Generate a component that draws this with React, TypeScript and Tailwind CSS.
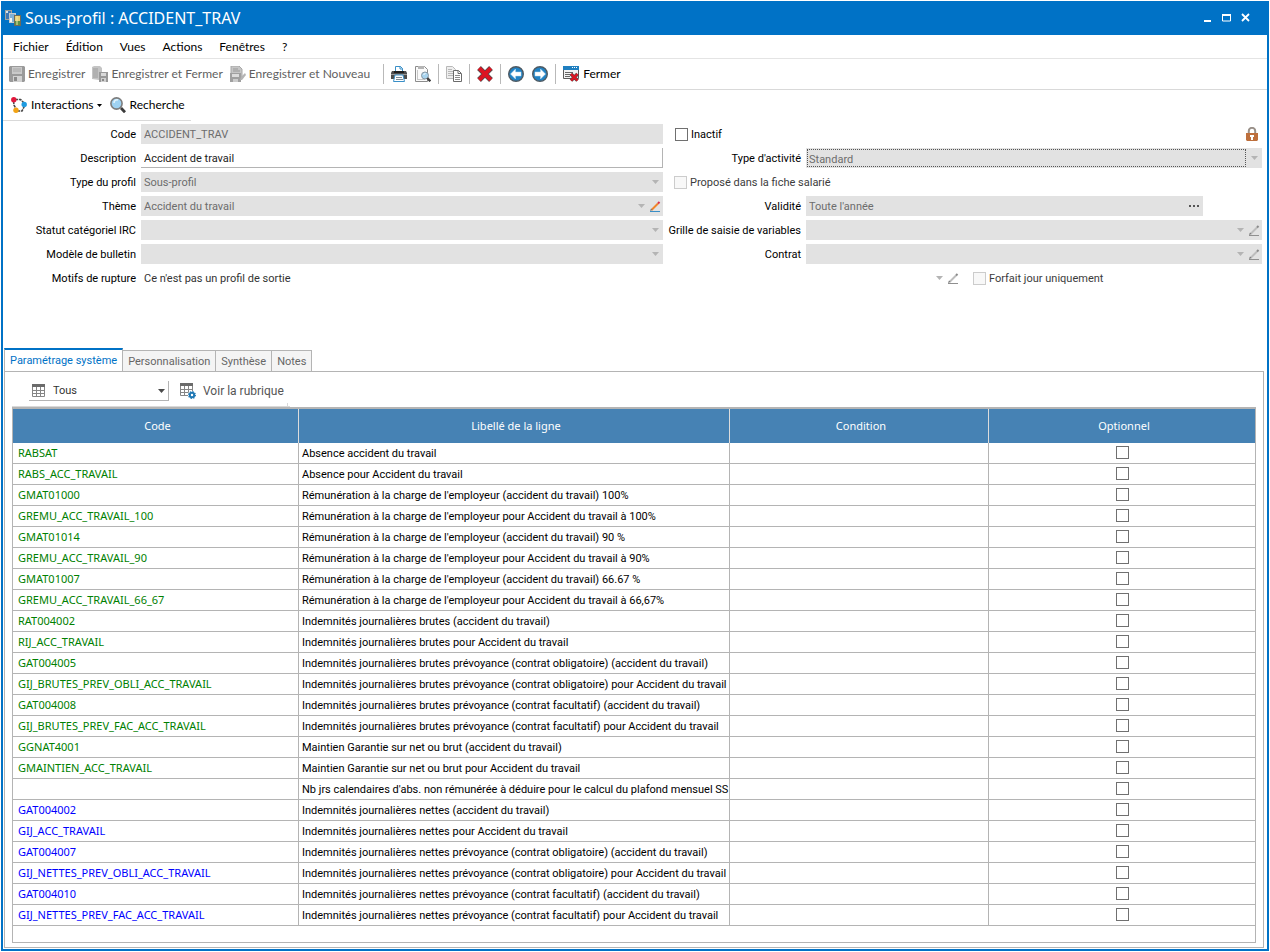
import React, { useState } from 'react'

interface Line {
  code: string
  label: string
  kind: 'system' | 'custom'
}

const lines: Line[] = [
  { code: 'RABSAT', label: 'Absence accident du travail', kind: 'system' },
  { code: 'RABS_ACC_TRAVAIL', label: 'Absence pour Accident du travail', kind: 'system' },
  { code: 'GMAT01000', label: "Rémunération à la charge de l'employeur (accident du travail) 100%", kind: 'system' },
  { code: 'GREMU_ACC_TRAVAIL_100', label: "Rémunération à la charge de l'employeur pour Accident du travail à 100%", kind: 'system' },
  { code: 'GMAT01014', label: "Rémunération à la charge de l'employeur (accident du travail) 90 %", kind: 'system' },
  { code: 'GREMU_ACC_TRAVAIL_90', label: "Rémunération à la charge de l'employeur pour Accident du travail à 90%", kind: 'system' },
  { code: 'GMAT01007', label: "Rémunération à la charge de l'employeur (accident du travail) 66.67 %", kind: 'system' },
  { code: 'GREMU_ACC_TRAVAIL_66_67', label: "Rémunération à la charge de l'employeur pour Accident du travail à 66,67%", kind: 'system' },
  { code: 'RAT004002', label: 'Indemnités journalières brutes (accident du travail)', kind: 'system' },
  { code: 'RIJ_ACC_TRAVAIL', label: 'Indemnités journalières brutes pour Accident du travail', kind: 'system' },
  { code: 'GAT004005', label: 'Indemnités journalières brutes prévoyance (contrat obligatoire) (accident du travail)', kind: 'system' },
  { code: 'GIJ_BRUTES_PREV_OBLI_ACC_TRAVAIL', label: 'Indemnités journalières brutes prévoyance (contrat obligatoire) pour Accident du travail', kind: 'system' },
  { code: 'GAT004008', label: 'Indemnités journalières brutes prévoyance (contrat facultatif) (accident du travail)', kind: 'system' },
  { code: 'GIJ_BRUTES_PREV_FAC_ACC_TRAVAIL', label: 'Indemnités journalières brutes prévoyance (contrat facultatif) pour Accident du travail', kind: 'system' },
  { code: 'GGNAT4001', label: 'Maintien Garantie sur net ou brut (accident du travail)', kind: 'system' },
  { code: 'GMAINTIEN_ACC_TRAVAIL', label: 'Maintien Garantie sur net ou brut pour Accident du travail', kind: 'system' },
  { code: '', label: "Nb jrs calendaires d'abs. non rémunérée à déduire pour le calcul du plafond mensuel SS", kind: 'system' },
  { code: 'GAT004002', label: 'Indemnités journalières nettes (accident du travail)', kind: 'custom' },
  { code: 'GIJ_ACC_TRAVAIL', label: 'Indemnités journalières nettes pour Accident du travail', kind: 'custom' },
  { code: 'GAT004007', label: 'Indemnités journalières nettes prévoyance (contrat obligatoire) (accident du travail)', kind: 'custom' },
  { code: 'GIJ_NETTES_PREV_OBLI_ACC_TRAVAIL', label: 'Indemnités journalières nettes prévoyance (contrat obligatoire) pour Accident du travail', kind: 'custom' },
  { code: 'GAT004010', label: 'Indemnités journalières nettes prévoyance (contrat facultatif) (accident du travail)', kind: 'custom' },
  { code: 'GIJ_NETTES_PREV_FAC_ACC_TRAVAIL', label: 'Indemnités journalières nettes prévoyance (contrat facultatif) pour Accident du travail', kind: 'custom' },
]

const menus = ['Fichier', 'Édition', 'Vues', 'Actions', 'Fenêtres', '?']
const tabs = ['Paramétrage système', 'Personnalisation', 'Synthèse', 'Notes']

/* ---------- icons ---------- */

function Icon({ children }: { children: React.ReactNode }) {
  return (
    <svg width="16" height="16" viewBox="0 0 16 16" fill="none" className="shrink-0">
      {children}
    </svg>
  )
}

const AppIcon = () => (
  <Icon>
    <path d="M0 0h7v10H0z" fill="#a3a49c" />
    <path d="M1 1h5v8H1z" fill="#3f78b4" />
    <path d="M1 1h2v2H1zM4 3h2v2H4z" fill="#d6e4ee" />
    <path d="M4 3h7v10H4z" fill="#c4ccd0" />
    <path d="M5 4h5v8H5z" fill="#7fb0d4" />
    <path d="M5 8h2v4H5z" fill="#eef3f4" />
    <path d="M9 5h7v11H9z" fill="#6f6a58" />
    <path d="M10 6h5v9h-5z" fill="#e6cf74" />
    <path d="M10 11h5v4h-5z" fill="#5a9146" />
    <path d="M12 6v9" stroke="#f2e6a8" />
  </Icon>
)

const SaveIcon = () => (
  <Icon>
    <path d="M1 0h14l1 1v14l-1 1H1l-1-1V1z" fill="#9a9a9a" />
    <path d="M3 1h10v7H3z" fill="#c9c9c9" />
    <path d="M4 3h8M4 5h8" stroke="#a8a8a8" />
    <path d="M4 10h9v6H4z" fill="#d2d2d2" />
    <path d="M5 11h3v4H5z" fill="#8a8a8a" />
  </Icon>
)

const SaveCloseIcon = () => (
  <Icon>
    <path d="M0 1l2-1h6l2 2v5H7v7l-7-1z" fill="#c4c4c4" />
    <path d="M1 2h5v10H1z" fill="#b0b0b0" />
    <path d="M7 6h9v10H7z" fill="#999" />
    <path d="M9 7h5v3H9z" fill="#dadada" />
    <path d="M9 12h5v4H9z" fill="#d0d0d0" />
    <path d="M10 13h2v2h-2z" fill="#888" />
  </Icon>
)

const SaveNewIcon = () => (
  <Icon>
    <path d="M1 0h8l3 3v8H1z" fill="#c6c6c6" stroke="#a8a8a8" />
    <path d="M3 3h5M3 5h7" stroke="#999" />
    <path d="M0 7h11v9H0z" fill="#a0a0a0" />
    <path d="M2 8h7v3H2z" fill="#dcdcdc" />
    <path d="M3 13h5v3H3z" fill="#ccc" />
    <path d="M10 14l1-3 4-4 1 2-4 5z" fill="#b4b4b4" />
  </Icon>
)

const PrintIcon = () => (
  <Icon>
    <path d="M4.500 6V.5h5l2 2V6" fill="#fff" stroke="#3a8fc7" />
    <path d="M9 0v3h3" stroke="#3a8fc7" />
    <path d="M1 5h14l1 2v6H0V7z" fill="#4c4c4c" />
    <path d="M3 5h10v2H3z" fill="#1f1f1f" />
    <path d="M0 8h16v1H0z" fill="#9a9a9a" />
    <path d="M4 9h8l1.500 6.500h-11z" fill="#fff" stroke="#3a8fc7" />
    <path d="M5 11.500h6M5 13.500h7" stroke="#7d8a93" />
  </Icon>
)

const PreviewIcon = () => (
  <Icon>
    <path d="M.5.5h9l3 3v12H.5z" fill="#fafafa" stroke="#8c8c8c" />
    <path d="M3 0h6v3H3z" fill="#b5b5b5" />
    <path d="M2.500 4v10M2 13.500h8" stroke="#c8c8c8" />
    <circle cx="10" cy="9.500" r="3.500" fill="#a8d4ef" stroke="#8797a3" />
    <path d="M8.500 8.500l2-1" stroke="#fff" />
    <path d="M12.300 12l3 3.300" stroke="#3f3f3f" strokeWidth="2.400" />
  </Icon>
)

const CopyIcon = () => (
  <Icon>
    <path d="M.5.5h6l3 3v9h-9z" fill="#eee" stroke="#b8b8b8" />
    <path d="M2 3.500h4M2 5.500h5M2 7.500h5M2 9.500h5" stroke="#b8b8b8" />
    <path d="M7.500 4.500h5l3 3v8h-8z" fill="#fff" stroke="#6b6b6b" />
    <path d="M12 4.500v3h3" stroke="#6b6b6b" />
    <path d="M9 9.500h5M9 11.500h5M9 13.500h5" stroke="#8d8d8d" />
  </Icon>
)

const DeleteIcon = () => (
  <Icon>
    <path d="M2 2l12 12M14 2L2 14" stroke="#5b4a4d" strokeWidth="5.400" />
    <path d="M2.200 2.200l11.600 11.600M13.800 2.200L2.200 13.800" stroke="#dd1421" strokeWidth="3.800" />
  </Icon>
)

const ArrowIcon = ({ right = false }: { right?: boolean }) => (
  <Icon>
    <circle cx="8" cy="8" r="7.300" fill="#2182c4" stroke="#4e5a63" strokeWidth="1.400" />
    <path
      d={right ? 'M13.500 8L8.500 3v3H3v4h5.500v3z' : 'M2.500 8l5-5v3H13v4H7.500v3z'}
      fill="#fff"
      stroke="#b9d9ee"
      strokeWidth=".5"
    />
  </Icon>
)

const CloseWindowIcon = () => (
  <Icon>
    <path d="M.5.5h15v12H.5z" fill="#f2f2f2" stroke="#5a5a5a" />
    <path d="M0 0h16v4H0z" fill="#1f7fc0" />
    <path d="M9 1.500h1M11 1.500h1M13 1.500h1" stroke="#fff" />
    <path d="M2 6.500h8M2 8.500h6M2 10.500h5" stroke="#666" />
    <path d="M8 8l6.500 6.500M14.500 8L8 14.500" stroke="#5b4a4d" strokeWidth="3.600" />
    <path d="M8 8l6.500 6.500M14.500 8L8 14.500" stroke="#dd1421" strokeWidth="2.400" />
  </Icon>
)

const InteractionsIcon = () => (
  <Icon>
    <path d="M4 2.500h5.500l4 4M2.500 4l.5 4 2 4M6 14h5l2.500-5" stroke="#4a4a4a" strokeWidth="1.600" strokeDasharray="3 .8" />
    <circle cx="2.800" cy="2.800" r="2.700" fill="#e2173c" />
    <circle cx="13.200" cy="7.500" r="2.700" fill="#1f9be0" />
    <circle cx="5" cy="13.200" r="2.700" fill="#f2a314" />
  </Icon>
)

const SearchIcon = () => (
  <Icon>
    <circle cx="6.500" cy="6.500" r="5.600" fill="#9ed2f2" stroke="#7d7d7d" strokeWidth="1.600" />
    <path d="M4 6a3 3 0 0 1 4-3" stroke="#e6f5fd" strokeWidth="1.500" />
    <path d="M11 11l4 4.300" stroke="#3b3b3b" strokeWidth="2.800" />
  </Icon>
)

const GridIcon = () => (
  <svg width="13" height="13" viewBox="0 0 13 13" fill="none" className="shrink-0">
    <path d="M.5.5h12v12H.5zM4.500 3v9.500M8.500 3v9.500M0 6.500h13M0 9.500h13" stroke="#858585" />
    <path d="M0 0h13v3H0z" fill="#6b6b6b" />
  </svg>
)

const GridGearIcon = () => (
  <Icon>
    <path d="M.5.5h12v12H.5zM4.500 3v9.500M8.500 3v9.500M0 6.500h13M0 9.500h13" stroke="#858585" />
    <path d="M0 0h13v3H0z" fill="#6b6b6b" />
    <circle cx="12" cy="12" r="4" fill="#fff" />
    <circle cx="12" cy="12" r="2.200" stroke="#1f78b4" strokeWidth="2" />
    <circle cx="12" cy="12" r="3.400" stroke="#1f78b4" strokeWidth="1.200" strokeDasharray="1.300 1.370" />
  </Icon>
)

const PencilIcon = ({ active = false }: { active?: boolean }) => (
  <svg width="11" height="11" viewBox="0 0 11 11" fill="none" className="shrink-0">
    <path d="M1.500 9L8 2.500" stroke={active ? '#f0852a' : '#bdbdbd'} strokeWidth="2" />
    <path d="M8 2.500L9.500 1" stroke={active ? '#d9304f' : '#8a8a8a'} strokeWidth="2" />
    <path d="M0 10l1-2.500L2.500 9z" fill="#777" />
    <path d="M0 10.500h10" stroke={active ? '#3a8fc7' : '#8f8f8f'} />
  </svg>
)

const LockIcon = () => (
  <svg width="12" height="14" viewBox="0 0 12 14" fill="none" aria-label="Verrouillé">
    <path d="M2.800 7V4a3.200 3.200 0 0 1 6.400 0v3" stroke="#999089" strokeWidth="2" />
    <path d="M0 6h12v7l-1 1H1l-1-1z" fill="#bd6f3c" />
    <path d="M4 8h4v2H7v3H5v-3H4z" fill="#fff" />
  </svg>
)

const Caret = ({ dark = false }: { dark?: boolean }) => (
  <svg width="7" height="4" viewBox="0 0 7 4" className="shrink-0">
    <path d="M0 0h7L3.500 4z" fill={dark ? '#4a4a4a' : '#b4b4b4'} />
  </svg>
)

/* ---------- form pieces ---------- */

interface ComboProps {
  id: string
  value?: string
  pencil?: 'active' | 'inactive'
  focused?: boolean
  plain?: boolean
}

function Combo({ id, value = '', pencil, focused, plain }: ComboProps) {
  return (
    <div className={`flex h-5 items-center gap-[5px] ${plain ? '' : 'bg-[#e2e2e2]'} ${pencil ? 'pr-[2px]' : 'pr-1'}`}>
      <select
        id={id}
        disabled
        className={`h-[18px] min-w-0 flex-1 appearance-none bg-transparent pt-[2px] opacity-100 ${
          focused ? 'ml-px border border-dotted border-[#555] pl-px' : 'pl-[3px]'
        } ${plain ? 'text-[#333]' : 'text-[#6d6d6d]'}`}
      >
        <option>{value}</option>
      </select>
      <Caret />
      {pencil && <PencilIcon active={pencil === 'active'} />}
    </div>
  )
}

function Label({ htmlFor, children }: { htmlFor: string; children: React.ReactNode }) {
  return (
    <label htmlFor={htmlFor} className="pt-[2px] pr-[5px] text-right whitespace-nowrap">
      {children}
    </label>
  )
}

function Check({ label, disabled }: { label: string; disabled?: boolean }) {
  return (
    <label className={`flex items-center gap-[3px] whitespace-nowrap ${disabled ? 'text-[#3c3c3c]' : ''}`}>
      <input
        type="checkbox"
        disabled={disabled}
        className="size-[13px] appearance-none border border-[#707070] bg-white checked:bg-[#707070] disabled:border-[#cccccc] disabled:bg-[#f8f8f8]"
      />
      <span className="pt-[2px]">{label}</span>
    </label>
  )
}

const Separator = () => <span className="h-5 w-px bg-[#b9b9b9]" />

export default function App() {
  const [activeTab, setActiveTab] = useState(tabs[0])
  const [description, setDescription] = useState('Accident de travail')

  return (
    <div className="min-h-screen bg-white p-px font-['Roboto',sans-serif] text-[11px] leading-4 text-black">
      <div className="border-2 border-t-0 border-[#0072c6] bg-white">
        {/* Title bar */}
        <header className="flex h-[34px] items-center bg-[#0072c6] pr-4 pl-[2px] text-white">
          <AppIcon />
          <h1 className="ml-1 flex-1 font-['Noto_Sans',sans-serif] text-[16px] leading-5">Sous-profil : ACCIDENT_TRAV</h1>
          <div className="flex items-center gap-[9px]">
            <button aria-label="Réduire">
              <svg width="10" height="10"><path d="M1 7h7v2H1z" fill="#fff" /></svg>
            </button>
            <button aria-label="Agrandir">
              <svg width="10" height="10"><path d="M.5 2h8v6h-8z" fill="none" stroke="#fff" /><path d="M0 1h9v2H0z" fill="#fff" /></svg>
            </button>
            <button aria-label="Fermer la fenêtre">
              <svg width="10" height="10"><path d="M1 1l7 7M8 1L1 8" stroke="#fff" strokeWidth="1.800" /></svg>
            </button>
          </div>
        </header>

        {/* Menu bar */}
        <nav className="flex h-6 items-center gap-[17px] border-b border-[#e4e4e4] px-[10px] font-['Lato',sans-serif] text-[12px]">
          {menus.map(menu => (
            <button key={menu}>{menu}</button>
          ))}
        </nav>

        {/* Toolbar */}
        <div className="flex h-[31px] items-center gap-[7px] border-b border-[#d9d9d9] px-[6px] font-['Lato',sans-serif] text-[12px]">
          <div className="flex items-center gap-[7px] pr-[6px] text-[#5f5f5f]">
            <button disabled className="flex items-center gap-[3px]"><SaveIcon />Enregistrer</button>
            <button disabled className="flex items-center gap-[3px]"><SaveCloseIcon />Enregistrer et Fermer</button>
            <button disabled className="flex items-center gap-[3px]"><SaveNewIcon />Enregistrer et Nouveau</button>
          </div>
          <Separator />
          <div className="flex items-center gap-2">
            <button aria-label="Imprimer"><PrintIcon /></button>
            <button aria-label="Aperçu"><PreviewIcon /></button>
          </div>
          <Separator />
          <button aria-label="Copier"><CopyIcon /></button>
          <Separator />
          <button aria-label="Supprimer"><DeleteIcon /></button>
          <Separator />
          <div className="flex items-center gap-2">
            <button aria-label="Précédent"><ArrowIcon /></button>
            <button aria-label="Suivant"><ArrowIcon right /></button>
          </div>
          <Separator />
          <button className="flex items-center gap-1"><CloseWindowIcon />Fermer</button>
        </div>

        <div className="flex h-[31px] w-[188px] items-center gap-2 border-b border-[#d9d9d9] pl-2 font-['Lato',sans-serif] text-[12px]">
          <button className="flex items-center gap-1">
            <InteractionsIcon />
            <span className="flex items-center gap-[3px]">Interactions<svg width="5" height="3"><path d="M0 0h5L2.500 3z" /></svg></span>
          </button>
          <button className="flex items-center gap-1"><SearchIcon />Recherche</button>
          <span className="ml-auto h-[3px] w-px self-end bg-[#d9d9d9]" />
        </div>

        {/* Form */}
        <form className="flex flex-col gap-1 pt-[3px] pr-[5px] pb-[60px]">
          <div className="grid grid-cols-[138px_minmax(0,522fr)_143px_minmax(0,456fr)] items-center gap-y-1">
            <Label htmlFor="code">Code</Label>
            <input id="code" disabled defaultValue="ACCIDENT_TRAV" className="h-5 min-w-0 bg-[#e2e2e2] px-[3px] pt-px text-[#6d6d6d]" />
            <div className="col-span-2 flex items-center justify-between pr-1 pl-3">
              <Check label="Inactif" />
              <LockIcon />
            </div>

            <Label htmlFor="description">Description</Label>
            <input
              id="description"
              value={description}
              onChange={e => setDescription(e.target.value)}
              className="h-5 min-w-0 border-r border-b border-[#b4b4b4] px-[3px] pt-[2px] text-[#222] outline-none"
            />
            <Label htmlFor="activite">Type d'activité</Label>
            <Combo id="activite" value="Standard" focused />

            <Label htmlFor="type">Type du profil</Label>
            <Combo id="type" value="Sous-profil" />
            <div className="col-span-2 pl-[11px]">
              <Check label="Proposé dans la fiche salarié" disabled />
            </div>

            <Label htmlFor="theme">Thème</Label>
            <Combo id="theme" value="Accident du travail" pencil="active" />
            <Label htmlFor="validite">Validité</Label>
            <div className="mr-[59px] flex h-5 items-center bg-[#e2e2e2] pr-1">
              <input id="validite" disabled defaultValue="Toute l'année" className="min-w-0 flex-1 px-[3px] pt-[2px] text-[#6d6d6d]" />
              <button type="button" aria-label="Choisir la validité">
                <svg width="10" height="2"><path d="M0 0h2v2H0zM4 0h2v2H4zM8 0h2v2H8z" fill="#555" /></svg>
              </button>
            </div>

            <Label htmlFor="statut">Statut catégoriel IRC</Label>
            <Combo id="statut" />
            <Label htmlFor="grille">Grille de saisie de variables</Label>
            <Combo id="grille" pencil="inactive" />

            <Label htmlFor="modele">Modèle de bulletin</Label>
            <Combo id="modele" />
            <Label htmlFor="contrat">Contrat</Label>
            <Combo id="contrat" pencil="inactive" />
          </div>

          <div className="grid grid-cols-[138px_minmax(0,820fr)_minmax(0,301fr)] items-center">
            <Label htmlFor="motifs">Motifs de rupture</Label>
            <Combo id="motifs" value="Ce n'est pas un profil de sortie" pencil="inactive" plain />
            <div className="pl-3">
              <Check label="Forfait jour uniquement" disabled />
            </div>
          </div>
        </form>

        {/* Tabs */}
        <div className="px-px pb-px">
          <div role="tablist" className="flex items-end">
            {tabs.map(tab => (
              <button
                key={tab}
                role="tab"
                aria-selected={tab === activeTab}
                onClick={() => setActiveTab(tab)}
                className={
                  tab === activeTab
                    ? 'h-[23px] border-t-2 border-r border-l border-t-[#0072c6] border-x-[#b4b4b4] bg-white px-[5px] text-[#0072c6]'
                    : 'h-[21px] border-t border-r border-[#b4b4b4] bg-[#f4f4f4] px-[5px] pt-px text-[#666]'
                }
              >
                {tab}
              </button>
            ))}
          </div>

          <div className="mr-[2px] border border-[#b4b4b4] px-[7px] pt-[7px] pb-1">
            <div className="flex h-7 w-[278px] items-start gap-[11px] border-b border-[#d9d9d9] pt-[2px] pl-[17px]">
              <div className="flex h-5 w-[140px] shrink-0 items-center gap-2 border-r border-b border-[#b4b4b4] pr-[3px] pl-[3px]">
                <GridIcon />
                <select aria-label="Filtre" className="min-w-0 flex-1 appearance-none pt-px text-[#333]">
                  <option>Tous</option>
                </select>
                <Caret dark />
              </div>
              <button className="flex h-5 items-center gap-[7px] whitespace-nowrap text-[12px] text-[#555]">
                <GridGearIcon />
                Voir la rubrique
              </button>
              <span className="-ml-2 h-[3px] w-px self-end bg-[#d9d9d9]" />
            </div>

            <div className="border border-t-2 border-[#b4b4b4]">
              <table className="w-full table-fixed border-separate border-spacing-0">
                <colgroup>
                  <col className="w-[286px]" />
                  <col className="w-[431px]" />
                  <col className="w-[259px]" />
                  <col />
                </colgroup>
                <thead className="font-['Noto_Sans',sans-serif]">
                  <tr className="h-[34px] bg-[#4682b4] text-white">
                    <th className="border-r border-[#dcdcdc] pl-1 font-normal">Code</th>
                    <th className="border-r border-[#dcdcdc] pl-1 font-normal">Libellé de la ligne</th>
                    <th className="border-r border-[#dcdcdc] pl-1 font-normal">Condition</th>
                    <th className="pl-1 font-normal">Optionnel</th>
                  </tr>
                </thead>
                <tbody>
                  {lines.map((line, i) => (
                    <tr key={i} className="h-[21px]">
                      <td className={`border-r border-b border-[#b4b4b4] pb-px pl-[5px] font-['Noto_Sans',sans-serif] ${line.kind === 'system' ? 'text-[#008000]' : 'text-[#0000ff]'}`}>
                        {line.code}
                      </td>
                      <td className="border-r border-b border-[#b4b4b4] pt-[2px] pl-[3px] whitespace-nowrap">{line.label}</td>
                      <td className="border-r border-b border-[#b4b4b4]" />
                      <td className="border-b border-[#b4b4b4] pb-px">
                        <input
                          type="checkbox"
                          aria-label={`Optionnel : ${line.label}`}
                          className="mx-auto block size-[13px] appearance-none border border-[#707070] bg-white checked:bg-[#707070]"
                        />
                      </td>
                    </tr>
                  ))}
                </tbody>
              </table>
              <div className="h-4" />
            </div>
          </div>
        </div>
      </div>
    </div>
  )
}
